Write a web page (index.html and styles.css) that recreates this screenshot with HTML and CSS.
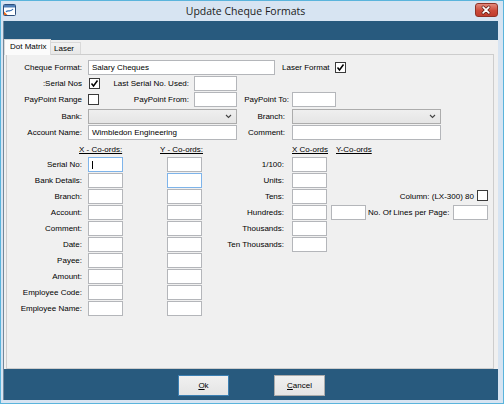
FILE: index.html
```html
<!DOCTYPE html>
<html>
<head>
<meta charset="utf-8">
<title>Update Cheque Formats</title>
<link rel="stylesheet" href="styles.css">
</head>
<body>
<div class="window">
  <div class="titlebar">
    <svg class="app-icon" width="13" height="12" viewBox="0 0 13 12">
      <rect x="0.5" y="0.5" width="12" height="11" rx="1" fill="#ffffff" stroke="#2d4f7c"/>
      <rect x="1" y="1" width="11" height="2.5" fill="#4f7fb8"/>
      <path d="M3 8 C5 5, 7 9, 10 5" fill="none" stroke="#2f6cb3" stroke-width="1.2"/>
      <path d="M1 11 L1 7.5 L4.5 11 Z" fill="#e86a1c"/>
    </svg>
    <div class="title">Update Cheque Formats</div>
    <div class="close">
      <svg width="23" height="14" viewBox="0 0 23 14">
        <path d="M8.5 4 L14.5 10 M14.5 4 L8.5 10" stroke="#5a1a12" stroke-width="3.2" stroke-linecap="round"/>
        <path d="M8.5 4 L14.5 10 M14.5 4 L8.5 10" stroke="#ffffff" stroke-width="1.8" stroke-linecap="round"/>
      </svg>
    </div>
  </div>
  <div class="client">
    <div class="band-top"></div>
    <div class="tabctl">
      <div class="tabs">
        <div class="tab active">Dot Matrix</div>
        <div class="tab laser-tab">Laser</div>
      </div>
      <div class="page">
        <div class="row">
          <div class="lbl c1">Cheque Format:</div>
          <div class="tb fmt">Salary Cheques</div>
          <div class="lbl laser-lbl">Laser Format</div>
          <div class="cb checked"><svg width="9" height="9" viewBox="0 0 9 9"><path d="M1.5 4.5 L3.5 7 L7.5 1.5" fill="none" stroke="#000" stroke-width="1.5"/></svg></div>
        </div>
        <div class="row">
          <div class="lbl c1">:Serial Nos</div>
          <div class="cb checked cb-serial"><svg width="9" height="9" viewBox="0 0 9 9"><path d="M1.5 4.5 L3.5 7 L7.5 1.5" fill="none" stroke="#000" stroke-width="1.5"/></svg></div>
          <div class="lbl last-lbl">Last Serial No. Used:</div>
          <div class="tb mid">&nbsp;</div>
        </div>
        <div class="row">
          <div class="lbl c1">PayPoint Range</div>
          <div class="cb cb-range"></div>
          <div class="lbl from-lbl">PayPoint From:</div>
          <div class="tb mid">&nbsp;</div>
          <div class="lbl to-lbl">PayPoint To:</div>
          <div class="tb to">&nbsp;</div>
        </div>
        <div class="row row-bank">
          <div class="lbl c1">Bank:</div>
          <div class="combo wide first"><svg class="chev" width="7" height="5" viewBox="0 0 7 5"><path d="M1 1 L3.5 3.5 L6 1" fill="none" stroke="#444" stroke-width="1.1"/></svg></div>
          <div class="lbl side-lbl">Branch:</div>
          <div class="combo wide second"><svg class="chev" width="7" height="5" viewBox="0 0 7 5"><path d="M1 1 L3.5 3.5 L6 1" fill="none" stroke="#444" stroke-width="1.1"/></svg></div>
        </div>
        <div class="row">
          <div class="lbl c1">Account Name:</div>
          <div class="tb wide first">Wimbledon Engineering</div>
          <div class="lbl side-lbl">Comment:</div>
          <div class="tb wide second">&nbsp;</div>
        </div>
        <div class="row head">
          <div class="lnk hx">X - Co-ords:</div>
          <div class="lnk hy">Y - Co-ords:</div>
          <div class="lnk hx2">X Co-ords</div>
          <div class="lnk">Y-Co-ords</div>
        </div>
        <div class="grid">
          <div class="col-left">
            <div class="row"><div class="lbl c1">Serial No:</div><div class="tb sm x focus"><span class="caret"></span></div><div class="tb sm y"></div></div>
            <div class="row"><div class="lbl c1">Bank Details:</div><div class="tb sm x"></div><div class="tb sm y hover"></div></div>
            <div class="row"><div class="lbl c1">Branch:</div><div class="tb sm x"></div><div class="tb sm y"></div></div>
            <div class="row"><div class="lbl c1">Account:</div><div class="tb sm x"></div><div class="tb sm y"></div></div>
            <div class="row"><div class="lbl c1">Comment:</div><div class="tb sm x"></div><div class="tb sm y"></div></div>
            <div class="row"><div class="lbl c1">Date:</div><div class="tb sm x"></div><div class="tb sm y"></div></div>
            <div class="row"><div class="lbl c1">Payee:</div><div class="tb sm x"></div><div class="tb sm y"></div></div>
            <div class="row"><div class="lbl c1">Amount:</div><div class="tb sm x"></div><div class="tb sm y"></div></div>
            <div class="row"><div class="lbl c1">Employee Code:</div><div class="tb sm x"></div><div class="tb sm y"></div></div>
            <div class="row"><div class="lbl c1">Employee Name:</div><div class="tb sm x"></div><div class="tb sm y"></div></div>
          </div>
          <div class="col-right">
            <div class="row"><div class="lbl c2">1/100:</div><div class="tb sm rx"></div></div>
            <div class="row"><div class="lbl c2">Units:</div><div class="tb sm rx"></div></div>
            <div class="row"><div class="lbl c2">Tens:</div><div class="tb sm rx"></div>
              <div class="endgroup"><div class="lbl">Column: (LX-300) 80</div><div class="cb cb-col"></div></div>
            </div>
            <div class="row"><div class="lbl c2">Hundreds:</div><div class="tb sm rx"></div><div class="tb sm ry"></div>
              <div class="lbl lines-lbl">No. Of Lines per Page:</div><div class="tb sm lines"></div>
            </div>
            <div class="row"><div class="lbl c2">Thousands:</div><div class="tb sm rx"></div></div>
            <div class="row"><div class="lbl c2">Ten Thousands:</div><div class="tb sm rx"></div></div>
          </div>
        </div>
      </div>
    </div>
    <div class="band-bottom">
      <div class="btn default"><u>O</u>k</div>
      <div class="btn"><u>C</u>ancel</div>
    </div>
  </div>
</div>
</body>
</html>
```
FILE: styles.css
```css
* { box-sizing: border-box; margin: 0; padding: 0; }
html, body { width: 504px; height: 404px; overflow: hidden; }
body {
  font-family: "Liberation Sans", Arial, sans-serif;
  font-size: 8px;
  color: #000;
  background: #ffffff;
}
.window {
  width: 504px;
  height: 404px;
  border: 1px solid #5ab4dc;
  background: #d7e4f2;
  display: flex;
  flex-direction: column;
}
.titlebar {
  height: 20px;
  flex: none;
  display: flex;
  align-items: flex-start;
}
.app-icon { flex: none; margin: 3px 0 0 2px; }
.title {
  flex: 1;
  text-align: center;
  font-family: "Open Sans", "Liberation Sans", sans-serif;
  font-size: 10.5px;
  line-height: 20px;
  color: #1b1b1b;
}
.close {
  flex: none;
  width: 23px;
  height: 14px;
  margin: 2px 5px 0 0;
  border: 1px solid #8e3227;
  border-radius: 3px;
  background: linear-gradient(#e2897c, #cb4a3a 55%, #c13d2e);
  display: flex;
}
.close svg { margin: -1px 0 0 -1px; }
.client {
  flex: 1;
  margin: 0 5px 3px 2px;
  border-left: 1px solid #73889b;
  display: flex;
  flex-direction: column;
  background: #f0f0f0;
}
.band-top { height: 19px; background: #285a7e; flex: none; }
.tabctl { height: 329px; flex: none; background: #f0f0f0; }
.tabs {
  height: 14px;
  display: flex;
  align-items: flex-start;
  position: relative;
  z-index: 1;
}
.tab {
  border: 1px solid #d9d9d9;
  border-bottom: none;
  white-space: nowrap;
}
.tab.active {
  margin-top: -1px;
  height: 16px;
  width: 47px;
  padding-left: 5px;
  line-height: 14px;
  background: #fbfbfb;
}
.laser-tab {
  margin-top: 2px;
  margin-left: -1px;
  height: 12px;
  width: 31px;
  padding-left: 3px;
  line-height: 12px;
  background: linear-gradient(#f2f2f2, #e8e8e8);
}
.page {
  margin-left: 2px;
  width: 488px;
  height: 315px;
  border: 1px solid #cdcdcd;
  background: #f0f0f0;
  padding-top: 5px;
}
.row {
  display: flex;
  align-items: flex-start;
  height: 16px;
}
.row-bank { margin-top: 1px; }
.lbl {
  flex: none;
  line-height: 15px;
  white-space: nowrap;
  text-align: right;
}
.c1 { width: 75px; }
.c2 { width: 82px; }
.tb {
  flex: none;
  height: 15px;
  border: 1px solid #b4b6ba;
  background: #fff;
  line-height: 13px;
  padding-left: 3px;
  white-space: nowrap;
  position: relative;
}
.tb.focus, .tb.hover { border-color: #7eb4ea; }
.caret {
  position: absolute;
  left: 3px;
  top: 3px;
  width: 1px;
  height: 8px;
  background: #000;
}
.cb {
  flex: none;
  width: 11px;
  height: 11px;
  margin-top: 2px;
  border: 1px solid #3a3a3a;
  background: #fff;
  display: flex;
  align-items: center;
  justify-content: center;
}
.fmt { margin-left: 6px; width: 187px; }
.laser-lbl { margin-left: 7px; width: 53px; text-align: left; }
.cb-serial { margin-left: 7px; }
.last-lbl { width: 89px; }
.mid { margin-left: 5px; width: 43px; }
.cb-range { margin-left: 6px; }
.from-lbl { width: 90px; }
.to-lbl { width: 52px; }
.to { margin-left: 3px; width: 44px; }
.wide { width: 149px; }
.first { margin-left: 6px; }
.second { margin-left: 7px; }
.side-lbl { width: 48px; }
.combo {
  flex: none;
  height: 15px;
  border: 1px solid #acacac;
  background: linear-gradient(#efefef, #e5e5e5);
  display: flex;
  align-items: center;
  justify-content: flex-end;
  padding-right: 4px;
}
.chev { display: block; }
.head { align-items: center; }
.lnk {
  flex: none;
  line-height: 15px;
  text-decoration: underline;
  white-space: nowrap;
}
.hx { margin-left: 72px; width: 81px; }
.hy { width: 132px; }
.hx2 { width: 44px; }
.grid { display: flex; align-items: flex-start; }
.col-left { flex: none; width: 195px; }
.col-right { flex: none; width: 286px; }
.sm { width: 35px; }
.x { margin-left: 6px; }
.y { margin-left: 44px; }
.rx { margin-left: 8px; }
.ry { margin-left: 4px; }
.endgroup { margin-left: auto; display: flex; align-items: flex-start; }
.cb-col { margin-left: 3px; margin-top: 1px; }
.lines-lbl { margin-left: 2px; }
.lines { margin-left: auto; }
.band-bottom {
  flex: 1;
  background: #285a7e;
  display: flex;
  justify-content: center;
  align-items: flex-start;
  gap: 45px;
  padding-top: 6px;
  padding-left: 1px;
}
.btn {
  width: 51px;
  height: 21px;
  border: 1px solid #acacac;
  background: linear-gradient(#f0f0f0, #e5e5e5);
  text-align: center;
  line-height: 19px;
  color: #000;
}
.btn.default { border-color: #3c7fb1; }
```
